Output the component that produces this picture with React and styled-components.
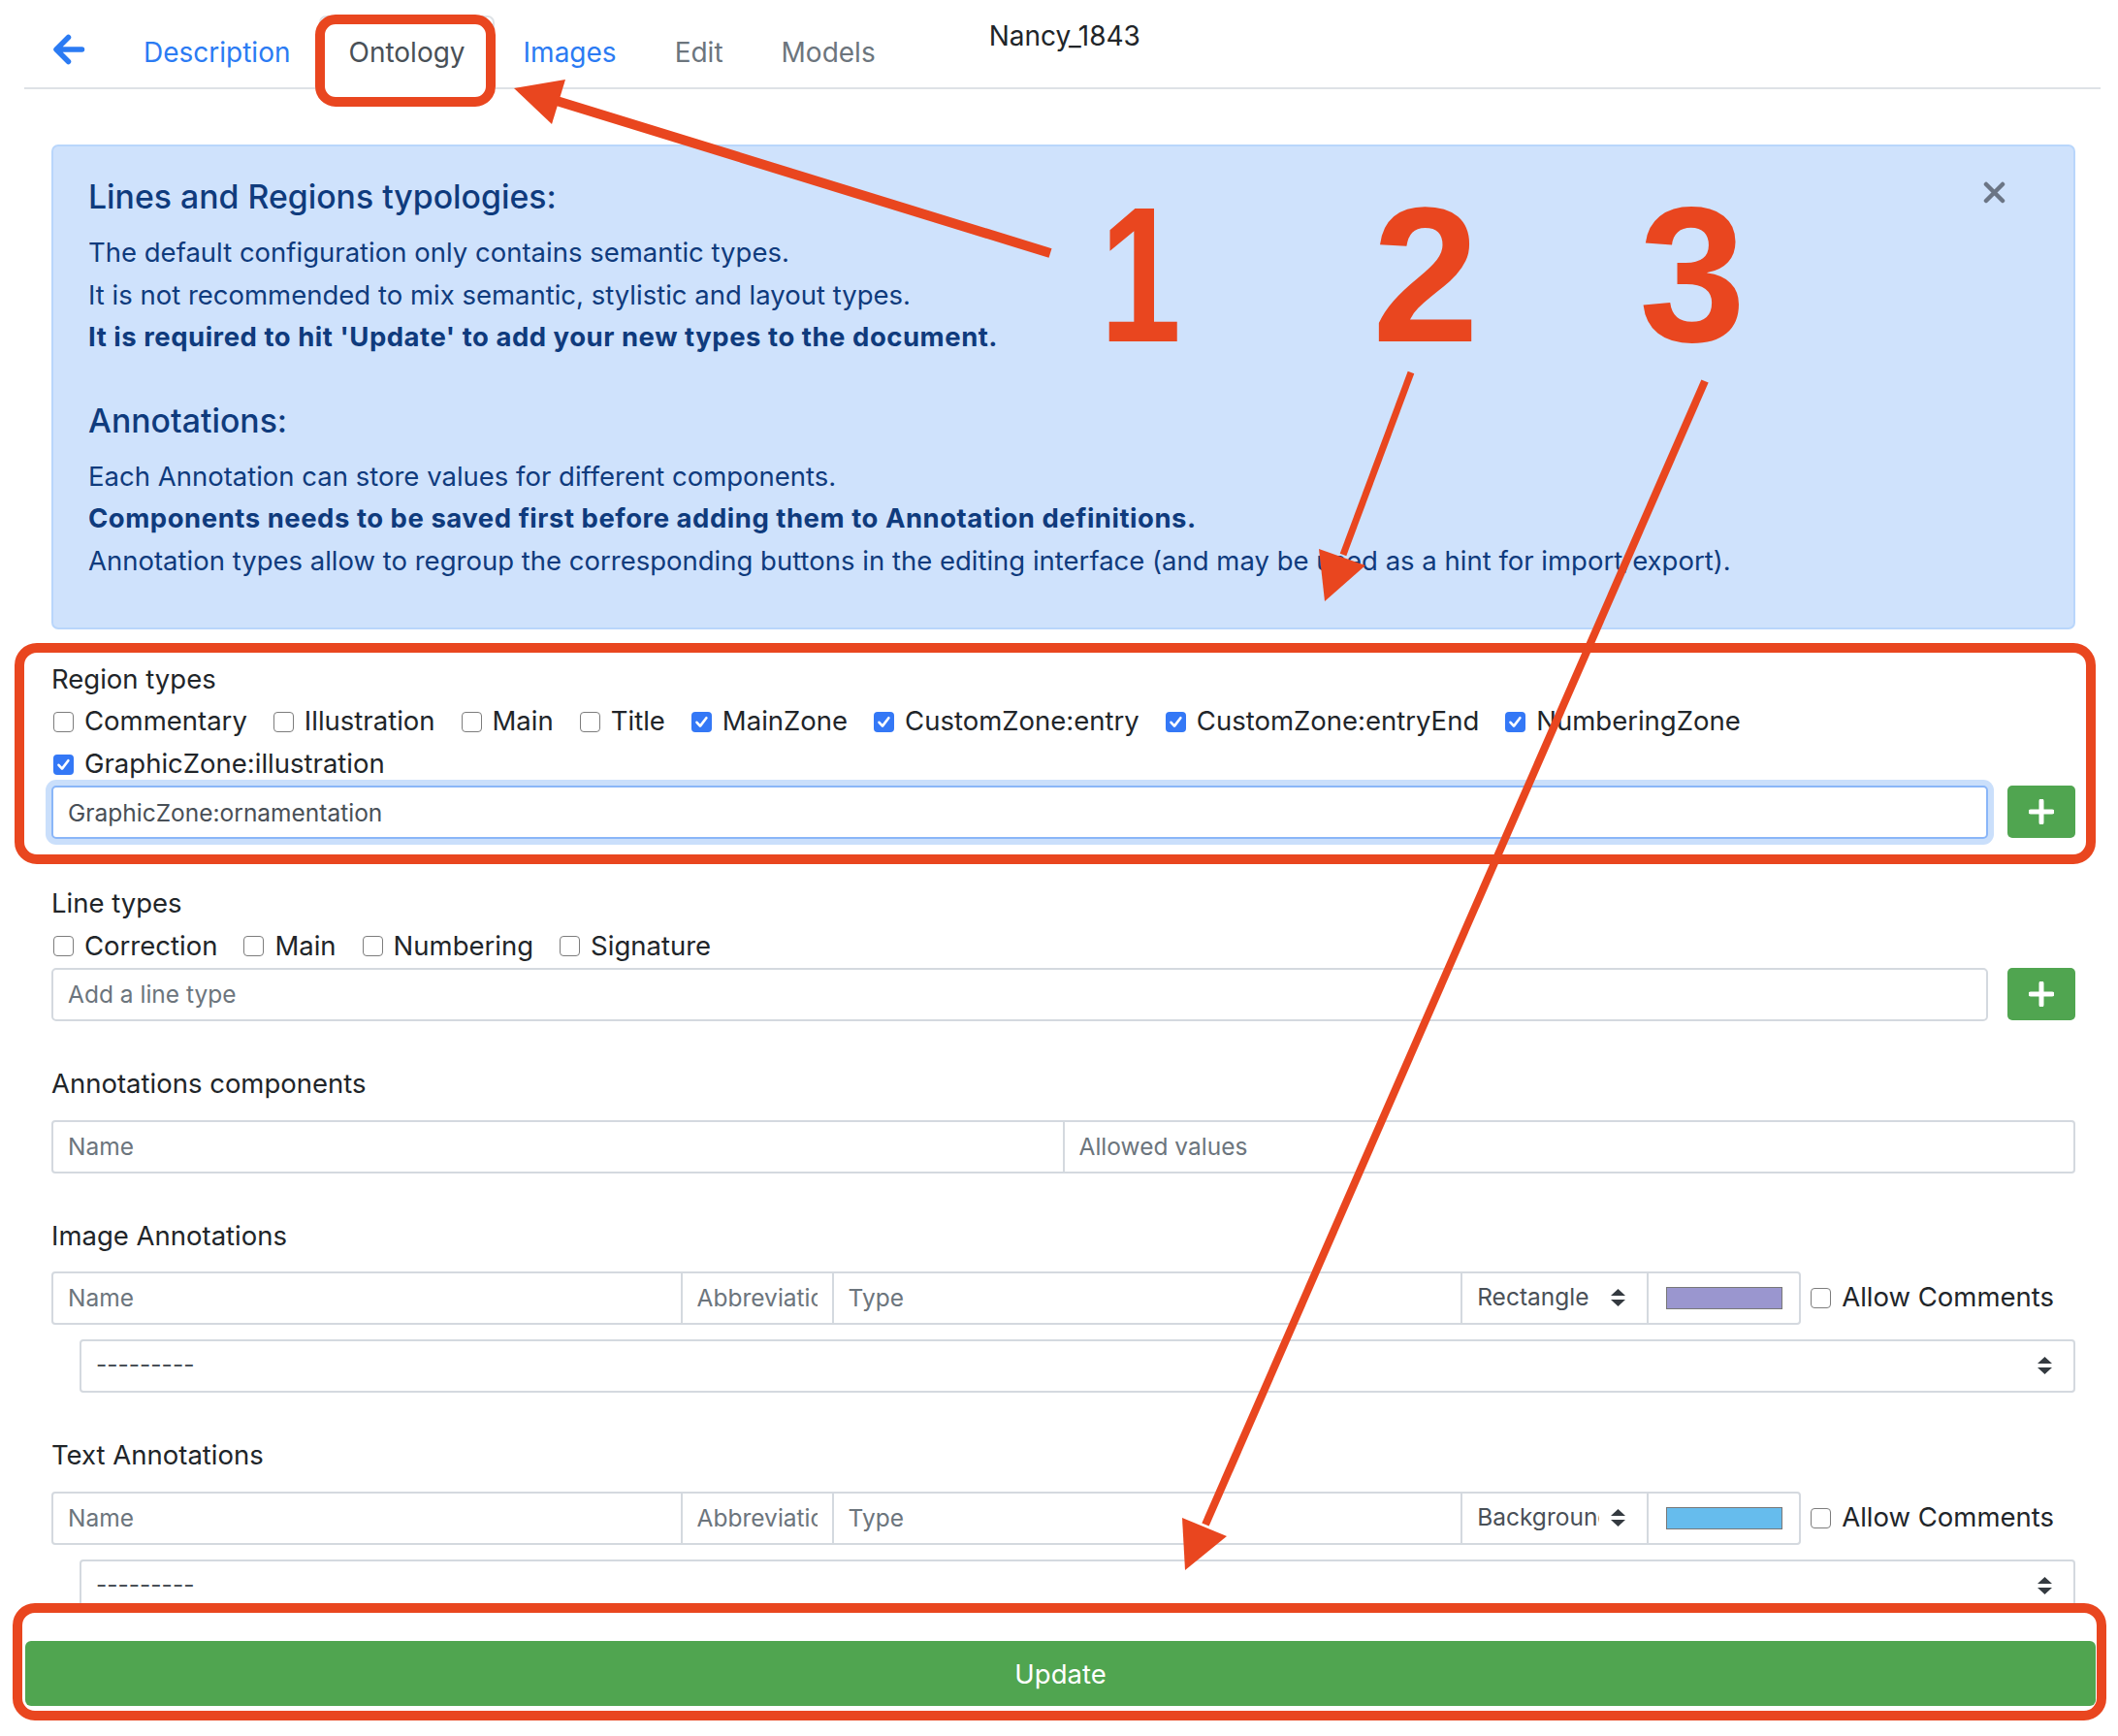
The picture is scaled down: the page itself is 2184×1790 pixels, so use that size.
import React from 'react';
import styled, { createGlobalStyle } from 'styled-components';

const GlobalStyle = createGlobalStyle`
  * { box-sizing: border-box; }
  html, body {
    margin: 0;
    padding: 0;
    background: #fff;
  }
  body {
    font-family: Inter, "Noto Sans", "Liberation Sans", sans-serif;
    font-size: 27.5px;
    line-height: 43.5px;
    color: #212529;
    overflow: hidden;
  }
`;

const RED = '#e9461f';
const GREEN = '#50a550';

const regionTypes = [
  { name: 'Commentary', checked: false },
  { name: 'Illustration', checked: false },
  { name: 'Main', checked: false },
  { name: 'Title', checked: false },
  { name: 'MainZone', checked: true },
  { name: 'CustomZone:entry', checked: true },
  { name: 'CustomZone:entryEnd', checked: true },
  { name: 'NumberingZone', checked: true },
  { name: 'GraphicZone:illustration', checked: true },
];

const lineTypes = ['Correction', 'Main', 'Numbering', 'Signature'];

const tabs = [
  { label: 'Description', color: '#2b7bf3' },
  { label: 'Ontology', color: '#495057', active: true },
  { label: 'Images', color: '#2b7bf3' },
  { label: 'Edit', color: '#6c757d' },
  { label: 'Models', color: '#6c757d' },
];

const Checkbox = ({ checked }) => (
  <Box $checked={checked}>
    {checked && (
      <svg width="21" height="21" viewBox="0 0 21 21">
        <path d="M5.5 10.8 L9 14.6 L15.4 6.2" fill="none" stroke="#fff" strokeWidth="2.6" strokeLinecap="round" strokeLinejoin="round" />
      </svg>
    )}
  </Box>
);

const SelectArrows = () => (
  <svg width="15" height="18" viewBox="0 0 15 18">
    <polygon points="0,7 7.5,0 15,7" fill="#343a40" />
    <polygon points="0,11 15,11 7.5,18" fill="#343a40" />
  </svg>
);

const PlusIcon = () => (
  <svg width="26" height="26" viewBox="0 0 26 26">
    <path d="M13 2 V24 M2 13 H24" stroke="#fff" strokeWidth="5" strokeLinecap="round" />
  </svg>
);

const AnnotationRow = ({ type, color }) => (
  <>
    <InputGroup>
      <Cell placeholder="Name" />
      <Cell placeholder="Abbreviation" $width="158px" />
      <Cell placeholder="Type" />
      <SelectCell $width="194px">
        <SelectText>{type}</SelectText>
        <SelectArrows />
      </SelectCell>
      <ColorCell>
        <Swatch style={{ background: color }} />
      </ColorCell>
      <AllowLabel>
        <Checkbox checked={false} />
        Allow Comments
      </AllowLabel>
    </InputGroup>
    <WideSelect>
      <SelectText>---------</SelectText>
      <SelectArrows />
    </WideSelect>
  </>
);

const Overlay = () => (
  <OverlaySvg width="2184" height="1790" viewBox="0 0 2184 1790">
    <g fill="none" stroke={RED} strokeWidth="10">
      <rect x="330" y="20" width="176" height="85" rx="16" />
      <rect x="20" y="668" width="2136" height="218" rx="18" />
      <rect x="18" y="1658" width="2149" height="111" rx="18" />
    </g>
    <g stroke={RED} strokeLinecap="butt">
      <line x1="1083" y1="261" x2="574" y2="104" strokeWidth="10" />
      <line x1="1455" y1="384" x2="1385" y2="572" strokeWidth="7" />
      <line x1="1758" y1="393" x2="1243" y2="1572" strokeWidth="8" />
    </g>
    <g fill={RED}>
      <polygon points="530,91 583,82 569,128" />
      <polygon points="1366,620 1360,566 1408,583" />
      <polygon points="1222,1619 1219,1565 1265,1584" />
    </g>
    <g fill={RED} fontFamily='"Liberation Sans", Arial, sans-serif' fontWeight="700" fontSize="198" textAnchor="middle">
      <text transform="translate(1176 352) scale(0.76 1)">1</text>
      <text x="1470" y="352">2</text>
      <text x="1745" y="352">3</text>
    </g>
  </OverlaySvg>
);

export default function App() {
  return (
    <Page>
      <GlobalStyle />
      <Nav>
        <BackTab>
          <svg width="34" height="34" viewBox="0 0 34 34">
            <path d="M30.5 17 H5 M16.5 4.5 L4 17 L16.5 29.5" fill="none" stroke="#2b7bf3" strokeWidth="5.5" strokeLinecap="round" strokeLinejoin="round" />
          </svg>
        </BackTab>
        {tabs.map(t => (
          <Tab key={t.label} $color={t.color} $active={t.active}>
            {t.label}
          </Tab>
        ))}
        <DocName>Nancy_1843</DocName>
      </Nav>

      <Content>
        <Alert>
          <AlertHeading>Lines and Regions typologies:</AlertHeading>
          <AlertText>
            <AlertLine>The default configuration only contains semantic types.</AlertLine>
            <AlertLine>It is not recommended to mix semantic, stylistic and layout types.</AlertLine>
            <AlertLine $bold>It is required to hit 'Update' to add your new types to the document.</AlertLine>
          </AlertText>
          <AlertHeading $spaced>Annotations:</AlertHeading>
          <AlertText>
            <AlertLine>Each Annotation can store values for different components.</AlertLine>
            <AlertLine $bold>Components needs to be saved first before adding them to Annotation definitions.</AlertLine>
            <AlertLine>
              Annotation types allow to regroup the corresponding buttons in the editing interface (and may be used as a hint for import/export).
            </AlertLine>
          </AlertText>
          <CloseButton>
            <svg width="23" height="23" viewBox="0 0 23 23">
              <path d="M3 3 L20 20 M20 3 L3 20" stroke="#6b7585" strokeWidth="4.5" strokeLinecap="round" />
            </svg>
          </CloseButton>
        </Alert>

        <Group $mt="30px">
          <FieldLabel>Region types</FieldLabel>
          <CheckList>
            {regionTypes.map(r => (
              <CheckItem key={r.name}>
                <Checkbox checked={r.checked} />
                {r.name}
              </CheckItem>
            ))}
          </CheckList>
          <AddRow>
            <TextInput $focused defaultValue="GraphicZone:ornamentation" />
            <PlusButton><PlusIcon /></PlusButton>
          </AddRow>
        </Group>

        <Group $mt="45px">
          <FieldLabel>Line types</FieldLabel>
          <CheckList>
            {lineTypes.map(l => (
              <CheckItem key={l}>
                <Checkbox checked={false} />
                {l}
              </CheckItem>
            ))}
          </CheckList>
          <AddRow>
            <TextInput placeholder="Add a line type" />
            <PlusButton><PlusIcon /></PlusButton>
          </AddRow>
        </Group>

        <Group $mt="43px">
          <FieldLabel $mb="15.5px">Annotations components</FieldLabel>
          <InputGroup>
            <Cell placeholder="Name" />
            <Cell placeholder="Allowed values" />
          </InputGroup>
        </Group>

        <Group $mt="43px">
          <FieldLabel $mb="14.5px">Image Annotations</FieldLabel>
          <AnnotationRow type="Rectangle" color="#9a96cf" />
        </Group>

        <Group $mt="43.5px">
          <FieldLabel $mb="15px">Text Annotations</FieldLabel>
          <AnnotationRow type="Background" color="#66bced" />
        </Group>
      </Content>

      <Footer>
        <UpdateButton>Update</UpdateButton>
      </Footer>

      <Overlay />
    </Page>
  );
}

const Page = styled.div`
  position: relative;
  width: 2184px;
  height: 1790px;
  padding: 16px 18px 0 25px;
`;

const Nav = styled.nav`
  display: flex;
  align-items: flex-start;
  border-bottom: 2px solid #dee2e6;
  font-size: 28px;
`;

const Tab = styled.a`
  display: block;
  padding: 15px 28px 13px;
  border: 2px solid transparent;
  border-radius: 7px 7px 0 0;
  margin-bottom: -2px;
  color: ${p => p.$color};
  background: ${p => (p.$active ? '#fff' : 'transparent')};
  border-color: ${p => (p.$active ? '#dee2e6 #dee2e6 #fff' : 'transparent')};
  cursor: pointer;
`;

const BackTab = styled(Tab)`
  display: flex;
  align-items: center;
  height: 75.5px;
  padding: 0 28px 6px 27px;

  svg {
    display: block;
  }
`;

const DocName = styled.span`
  margin-left: 87px;
  color: #212529;
`;

const Content = styled.main`
  padding: 0 26px 0 28px;
`;

const Alert = styled.div`
  position: relative;
  margin-top: 57.5px;
  padding: 31px 80px 46.5px 36px;
  background: #cfe2fc;
  border: 2px solid #b9d6fb;
  border-radius: 7px;
  color: #0f3b7d;
`;

const AlertHeading = styled.h5`
  margin: ${p => (p.$spaced ? '43px' : '0')} 0 15px;
  font-size: 33.8px;
  line-height: 42px;
  font-weight: 500;
`;

const AlertText = styled.div`
  margin: 0;
`;

const AlertLine = styled.div`
  font-weight: ${p => (p.$bold ? 700 : 400)};
  letter-spacing: ${p => (p.$bold ? '0.52px' : 'normal')};
`;

const CloseButton = styled.span`
  position: absolute;
  top: 36px;
  right: 70px;
  width: 23px;
  height: 23px;

  svg {
    display: block;
  }
`;

const Group = styled.section`
  margin-top: ${p => p.$mt};
`;

const FieldLabel = styled.div`
  margin-bottom: ${p => p.$mb || '0'};
`;

const CheckList = styled.div`
  display: flex;
  flex-wrap: wrap;
  max-width: 1900px;
`;

const CheckItem = styled.label`
  display: inline-flex;
  align-items: center;
  height: 44px;
  margin-right: 25px;
  white-space: nowrap;
`;

const Box = styled.span`
  display: inline-block;
  flex: none;
  width: 21px;
  height: 21px;
  margin: 0 11px 0 2px;
  border-radius: 4px;
  border: ${p => (p.$checked ? 'none' : '1.5px solid #7d7d7d')};
  background: ${p => (p.$checked ? '#3478f6' : '#fff')};

  svg {
    display: block;
  }
`;

const AddRow = styled.div`
  display: flex;
  align-items: flex-start;
`;

const TextInput = styled.input`
  flex: 1;
  min-width: 0;
  height: 55px;
  padding: 0 15px;
  border: 2px solid ${p => (p.$focused ? '#8ab6f8' : '#d4d9df')};
  border-radius: 5px;
  box-shadow: ${p => (p.$focused ? '0 0 0 6px #cadffb' : 'none')};
  font-family: inherit;
  font-size: 24.5px;
  color: #495057;
  outline: none;

  &::placeholder {
    color: #6c757d;
  }
`;

const PlusButton = styled.button`
  display: flex;
  align-items: center;
  justify-content: center;
  width: 70px;
  height: 54px;
  margin-left: 20px;
  padding: 0;
  border: none;
  border-radius: 5px;
  background: ${GREEN};
`;

const InputGroup = styled.div`
  display: flex;
  align-items: center;
`;

const Cell = styled.input`
  flex: ${p => (p.$width ? 'none' : '1')};
  width: ${p => p.$width || 'auto'};
  min-width: 0;
  height: 55px;
  padding: 0 15px;
  margin-left: -2px;
  border: 2px solid #d4d9df;
  border-radius: 0;
  font-family: inherit;
  font-size: 24.5px;
  color: #495057;
  background: #fff;
  outline: none;

  &:first-child {
    margin-left: 0;
    border-radius: 4px 0 0 4px;
  }

  &:last-child {
    border-radius: 0 4px 4px 0;
  }

  &::placeholder {
    color: #6c757d;
  }
`;

const SelectCell = styled.div`
  display: flex;
  align-items: center;
  flex: none;
  width: ${p => p.$width};
  height: 55px;
  margin-left: -2px;
  padding: 0 22px 0 15px;
  border: 2px solid #d4d9df;
  font-size: 24.5px;
  color: #495057;
  background: #fff;

  svg {
    flex: none;
    margin-left: 12px;
  }
`;

const SelectText = styled.span`
  flex: 1;
  min-width: 0;
  overflow: hidden;
  white-space: nowrap;
`;

const ColorCell = styled.div`
  display: flex;
  align-items: center;
  justify-content: center;
  flex: none;
  width: 159px;
  height: 55px;
  margin-left: -2px;
  border: 2px solid #d4d9df;
  border-radius: 0 4px 4px 0;
  background: #fff;
`;

const Swatch = styled.span`
  display: block;
  width: 120px;
  height: 23px;
  border: 1.5px solid #787878;
`;

const AllowLabel = styled.label`
  display: inline-flex;
  align-items: center;
  margin: 0 22px 0 8px;
  white-space: nowrap;
`;

const WideSelect = styled(SelectCell)`
  width: auto;
  margin: 15px 0 0 29px;
  border-radius: 4px;
`;

const Footer = styled.footer`
  position: fixed;
  left: 0;
  right: 0;
  bottom: 0;
  z-index: 5;
  padding: 30px 23px 31px 26px;
  background: #fff;
`;

const UpdateButton = styled.button`
  display: block;
  width: 100%;
  height: 67px;
  border: none;
  border-radius: 6px;
  background: ${GREEN};
  color: #fff;
  font-family: inherit;
  font-size: 27.5px;
`;

const OverlaySvg = styled.svg`
  position: absolute;
  top: 0;
  left: 0;
  z-index: 10;
  pointer-events: none;
`;
